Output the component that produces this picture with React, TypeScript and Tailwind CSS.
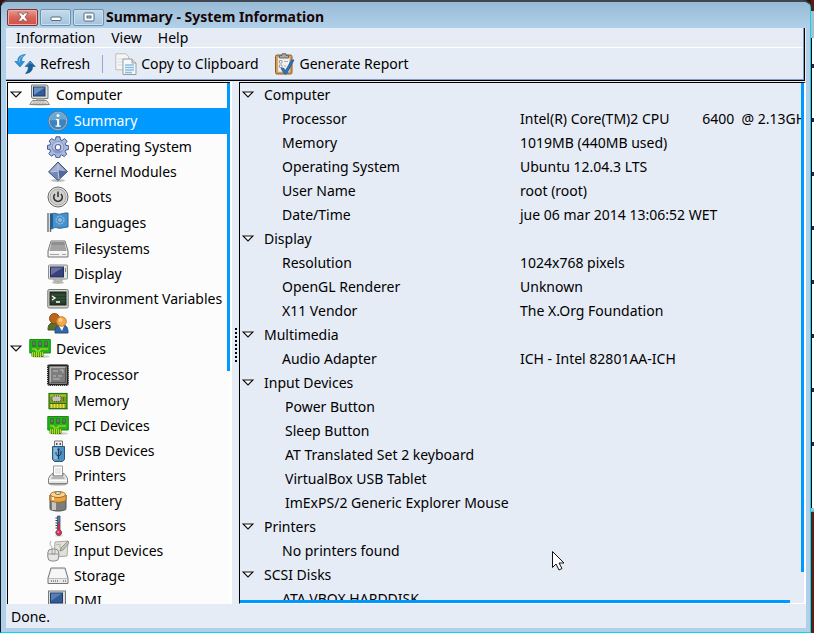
import React from "react";

type IconProps = { children: React.ReactNode; size?: string };

function Icon({ children, size = "size-[22px]" }: IconProps) {
  return (
    <svg viewBox="0 0 22 22" className={`${size} shrink-0`} aria-hidden="true">
      {children}
    </svg>
  );
}

const icons: Record<string, React.ReactNode> = {
  computer: (
    <>
      <ellipse cx="11" cy="20.5" rx="10" ry="1.2" fill="#ccc" />
      <path d="M2.5 1h15l1.500 1v12.500h-15l-1.500-1z" fill="#deded8" stroke="#777a74" />
      <rect x="4.500" y="3" width="11.500" height="9" fill="#315c96" stroke="#1e3b6b" />
      <path d="M5 3.500h11L5 11z" fill="#6b91c4" />
      <path d="M7 14.500h9v2H7z" fill="#b5b6b0" />
      <path d="M3.500 16.500h14l3 4H.8z" fill="#e4e4df" stroke="#888a85" />
      <path d="M4.500 18h12M3.500 19.300h14" stroke="#a5a69f" strokeDasharray="2 1" />
    </>
  ),
  summary: (
    <>
      <circle cx="11" cy="11" r="10" fill="#3d84bd" stroke="#61788b" />
      <circle cx="11" cy="11" r="8.800" fill="none" stroke="#91bfe0" />
      <path d="M3 10a8 8 0 0 1 16 0c-5-2-9 1-16 0z" fill="#76afd8" opacity=".8" />
      <circle cx="11" cy="5.600" r="1.500" fill="#fff" />
      <path d="M8.800 9h3.400v6.500h1.500v1.300H8.600v-1.300h1.500v-5.200H8.800z" fill="#fff" />
    </>
  ),
  gear: (
    <>
      <path
        d="M9 .8h4l.5 3.200 1.500.6 2.500-2 2.600 2.600-1.800 2.600.7 1.600 2.700.3v3.800l-3 .6-.6 1.600 1.700 2.400-2.600 2.500-2.500-1.700-1.500.6-.4 2.200H9l-.5-2.500-1.600-.7-2.500 1.700-2.600-2.600 1.700-2.500-.6-1.600-2.400-.3V9.400l2.500-.4.7-1.600-1.600-2.400 2.600-2.500 2.400 1.700 1.400-.6z"
        fill="#a9b8dd"
        stroke="#405a99"
      />
      <circle cx="11" cy="11.300" r="5.800" fill="#c3cce6" stroke="#7787b8" strokeWidth=".8" />
      <path d="M5.500 12.500c0 5 8 6.500 11 1-3 2-7 2-11-1z" fill="#8798c9" />
      <circle cx="11" cy="11.300" r="2.800" fill="#fff" stroke="#4a629f" strokeWidth="1.200" />
    </>
  ),
  kernel: (
    <>
      <ellipse cx="11" cy="19.500" rx="7" ry="1.500" fill="#bdbdbd" />
      <path d="M11 1l9.500 9.500-9.500 9L1.500 11z" fill="#7089b9" stroke="#445579" />
      <path d="M11 2l8 8.500-8-1-8.500 1.500z" fill="#a3b2d3" />
      <path d="M11 9.500l1 9 8-8z" fill="#526899" />
      <path d="M11 3v7l-7 1M11 10l1 8" stroke="#c5cee2" fill="none" />
    </>
  ),
  power: (
    <>
      <circle cx="11" cy="11" r="10" fill="#e3e3e1" stroke="#686868" />
      <circle cx="11" cy="11" r="8" fill="#d0d0ce" stroke="#aaa" />
      <path d="M8 8a4.300 4.300 0 1 0 6 0M11 5.500v5.500" fill="none" stroke="#333" strokeWidth="1.500" />
    </>
  ),
  flag: (
    <>
      <path d="M1 1v19M3.500 1v19" stroke="#777" strokeWidth="1.500" />
      <path d="M4 2c4-2 6 1 10 0s4-1 7-1v14c-5 0-6 2-10 1s-4 0-6 1z" fill="#4b91c9" stroke="#23669e" />
      <path d="M3 2h3v13l-3 4z" fill="#255f91" />
      <circle cx="13" cy="8" r="4" fill="none" stroke="#a9d3ef" strokeDasharray="2 1" />
      <circle cx="13" cy="8" r="2" fill="#8abfe5" />
    </>
  ),
  drive: (
    <>
      <path d="M4 3h14l3 10v6H1v-6z" fill="#f1f1ef" stroke="#737373" strokeLinejoin="round" />
      <path d="M4.800 4h12.400l2.500 9H2.300z" fill="#a2a2a2" />
      <path d="M4.800 4h12.400l.8 3H4z" fill="#8f8f8f" />
      <path d="M2 14h18" stroke="#fff" />
      <path d="M3 16.500h9M15 16.500h4" stroke="#a7a7a5" />
    </>
  ),
  display: (
    <>
      <ellipse cx="11" cy="19.500" rx="6" ry="1.500" fill="#b8b8b4" />
      <path d="M7 15h8v3H7z" fill="#ddd" stroke="#999" />
      <rect x="1.500" y="2" width="19" height="14" rx="1" fill="#e5e5df" stroke="#8b8d87" />
      <rect x="3.500" y="4" width="13" height="10" fill="#37417d" stroke="#252e60" />
      <path d="M4 4.500h12L4 12z" fill="#69719d" />
      <path d="M18.500 5v4" stroke="#888" />
    </>
  ),
  terminal: (
    <>
      <rect x=".8" y="1.500" width="20.400" height="18.500" rx="1.500" fill="#d6d7d1" stroke="#73766f" />
      <rect x="3" y="4" width="16" height="13" fill="#263c2a" stroke="#162218" />
      <path d="M3.500 7h15M3.500 10h15M3.500 13h15" stroke="#3c5d3e" />
      <path d="M5 8l3 2-3 2M9 14h4" fill="none" stroke="#fff" strokeWidth="1.300" />
    </>
  ),
  users: (
    <>
      <path d="M1 17c0-7 3-7 7-7s5 3 5 7z" fill="#59702a" stroke="#42551e" />
      <circle cx="7.500" cy="5.500" r="5" fill="#bd661b" stroke="#8f4b11" />
      <path d="M8 20c0-6 2-8 7-8s6 3 6 8z" fill="#3566a4" stroke="#254d81" />
      <path d="M12 13l3 5 2-5z" fill="#fff" />
      <circle cx="14.500" cy="8.500" r="4.800" fill="#f5a74b" stroke="#cf7c26" />
      <circle cx="13.500" cy="7" r="2" fill="#ffd18b" />
    </>
  ),
  card: (
    <>
      <ellipse cx="12" cy="18.500" rx="9" ry="1.300" fill="#ccc" />
      <path d="M.8 1.500h20.500v13.500H14v3.500H3V15H.8z" fill="#21b619" stroke="#148c10" />
      <path d="M3.500 3.500h3v5h-3zM9.500 3.500h3v5h-3zM15.500 3.500h3v5h-3z" fill="#423e36" />
      <path d="M5 4v3.500M11 4v3.500M17 4v3.500" stroke="#aaa" />
      <path d="M3 11h4v2h4v-2h8" fill="none" stroke="#ddd42d" />
      <path d="M3.500 14v5M5.500 14v5M7.500 14v5M9.500 14v5M11.500 14v5M13.500 14v4" stroke="#dfc426" />
    </>
  ),
  chip: (
    <>
      <rect x="0" y="0" width="22" height="22" rx="3" fill="#222" />
      <rect x=".5" y=".5" width="21" height="21" rx="2" fill="none" stroke="#d0d0d0" strokeDasharray="1 1" />
      <rect x="2" y="2" width="18" height="18" rx="1" fill="#7d7d7d" />
      <path d="M3.500 18.500v-15h15" fill="none" stroke="#b5b5b5" />
      <path d="M3.500 18.500h15v-15" fill="none" stroke="#555" />
      <path d="M6 7h5M13 6h3v3M6 12h3M11 12h4M6 15h7" fill="none" stroke="#bebebe" />
    </>
  ),
  memory: (
    <>
      <path d="M2 19h19" stroke="#ccc" strokeWidth="2" />
      <rect x="2" y="3.500" width="18" height="15" fill="#7d9a18" stroke="#1f7a12" strokeWidth="1.200" />
      <path d="M3 4.500h16v2H3z" fill="#aebf3a" />
      <rect x="5" y="6" width="9" height="5.500" rx="2" fill="#c4c4bc" stroke="#394224" strokeDasharray="1 1" />
      <path d="M16.500 7v4" stroke="#51701a" />
      <path d="M3 13h16v1H3z" fill="#2e6d12" />
      <path d="M4.500 14v4M7.500 14v4M10.500 14v4M13.500 14v4M16.500 14v4" stroke="#efdc3a" strokeWidth="2" />
    </>
  ),
  usb: (
    <>
      <path d="M7.500 1h8v7h-8z" fill="#ededeb" stroke="#777" />
      <path d="M9 3h1.500v2H9zM12.500 3H14v2h-1.500z" fill="#555" />
      <path d="M5.500 6.500h12v13l-2 2h-8l-2-2z" fill="#4f8fbf" stroke="#24577e" />
      <path d="M6.500 7.500h4v12h-4z" fill="#8ab7d6" />
      <path d="M11.500 19V9M9 12v2.500l2.500 2M14 11v3l-2.500 2.500" fill="none" stroke="#183957" />
      <path d="M11.500 8l-1.500 2h3z" fill="#183957" />
    </>
  ),
  printer: (
    <>
      <ellipse cx="11" cy="19.500" rx="9" ry="1" fill="#aaa" />
      <path d="M6.500 1h9v10h-9z" fill="#fff" stroke="#999" />
      <path d="M6 8L3.500 10l-2 3.500v5h19v-5l-2-3.500L16 8v3H6z" fill="#e6e6e4" stroke="#828282" />
      <path d="M8 3h6v6H8z" fill="#e9e9e8" />
      <path d="M4.500 12h13v2h-13z" fill="#b5b5b5" />
      <path d="M2 15.500h18" stroke="#fff" />
    </>
  ),
  battery: (
    <>
      <ellipse cx="11" cy="19.500" rx="9" ry="1.800" fill="#bbb" />
      <path d="M3 5v13c0 4 16 4 16 0V5z" fill="#7c7e7a" stroke="#555" />
      <path d="M5 9h4v11H5z" fill="#c6c7c3" />
      <path d="M3 5v5c2 3 14 3 16 0V5z" fill="#eda642" stroke="#a76a21" />
      <ellipse cx="11" cy="4.500" rx="7.500" ry="3" fill="#ffd58a" stroke="#a76a21" />
      <ellipse cx="11" cy="3" rx="3" ry="1.500" fill="#dfd9cc" stroke="#8f795d" />
      <path d="M6 7v3" stroke="#fff0ca" strokeWidth="2" />
    </>
  ),
  sensor: (
    <>
      <ellipse cx="12" cy="20.500" rx="4" ry="1.200" fill="#ddd" />
      <path d="M10.500 1h2.500v14a2.900 2.900 0 1 1-2.500 0z" fill="#4a80b5" stroke="#2f4c70" strokeWidth=".8" />
      <path d="M11.700 7v10" stroke="#df2337" strokeWidth="1.600" />
      <circle cx="11.800" cy="17.500" r="2.600" fill="#e92943" />
      <circle cx="11.300" cy="17" r=".9" fill="#ff9ca8" />
      <path d="M8.500 3h2M8.500 5.500h2M8.500 8h2M8.500 10.500h2M8.500 13h2" stroke="#333" />
    </>
  ),
  input: (
    <>
      <path d="M8 2l13-1-1 15-13 1z" fill="#e1e1d8" stroke="#aaa99d" />
      <path d="M9 5l4-1v4h5" stroke="#b8b7ab" fill="none" />
      <path d="M21 1l-7 7-1 3 3-1 6-7z" fill="#c4c4bc" stroke="#777" strokeWidth=".7" />
      <path d="M5 10C6 5 1 6 4 1" fill="none" stroke="#aaa" />
      <rect x=".8" y="9" width="11" height="12" rx="4" fill="#e6e6e4" stroke="#888" />
      <path d="M1 14h11M5 9v5h3V9" fill="none" stroke="#999" />
    </>
  ),
  storage: (
    <>
      <path d="M4 3h14l3 10v5.500H1V13z" fill="#e9e9e9" stroke="#777" strokeLinejoin="round" />
      <path d="M5 4.500h12l2.500 8.500H2.500z" fill="#f6f6f4" />
      <path d="M2 13.500h18" stroke="#bbb" />
      <path d="M4 16h8M16 16h3" stroke="#777" strokeWidth="1.500" strokeDasharray="1 1" />
    </>
  ),
  dmi: (
    <>
      <rect x="1.500" y="1" width="17" height="14.500" fill="#ddd" stroke="#777a74" />
      <rect x="3.500" y="3" width="12" height="10" fill="#315c96" stroke="#1e3b6b" />
      <path d="M4 3.500h11L4 11z" fill="#557eb5" />
      <path d="M3 17h14l3 4H1z" fill="#ddd" stroke="#888" />
    </>
  ),
};

function Triangle() {
  return (
    <svg viewBox="0 0 12 8" className="h-2 w-3 shrink-0" aria-hidden="true">
      <path d="M1 1h10L6 6z" fill="#fff" stroke="#111" strokeWidth="1.200" />
    </svg>
  );
}

type Node = { label: string; icon: string; tall?: boolean };
const tree: { label: string; icon: string; items: Node[] }[] = [
  {
    label: "Computer",
    icon: "computer",
    items: [
      { label: "Summary", icon: "summary", tall: true },
      { label: "Operating System", icon: "gear", tall: true },
      { label: "Kernel Modules", icon: "kernel" },
      { label: "Boots", icon: "power" },
      { label: "Languages", icon: "flag", tall: true },
      { label: "Filesystems", icon: "drive", tall: true },
      { label: "Display", icon: "display" },
      { label: "Environment Variables", icon: "terminal" },
      { label: "Users", icon: "users" },
    ],
  },
  {
    label: "Devices",
    icon: "card",
    items: [
      { label: "Processor", icon: "chip", tall: true },
      { label: "Memory", icon: "memory", tall: true },
      { label: "PCI Devices", icon: "card" },
      { label: "USB Devices", icon: "usb" },
      { label: "Printers", icon: "printer" },
      { label: "Battery", icon: "battery" },
      { label: "Sensors", icon: "sensor" },
      { label: "Input Devices", icon: "input" },
      { label: "Storage", icon: "storage" },
      { label: "DMI", icon: "dmi" },
    ],
  },
];

const details: { title: string; indent?: boolean; rows: [string, string?][] }[] = [
  {
    title: "Computer",
    rows: [
      ["Processor", "Intel(R) Core(TM)2 CPU         6400  @ 2.13GHz"],
      ["Memory", "1019MB (440MB used)"],
      ["Operating System", "Ubuntu 12.04.3 LTS"],
      ["User Name", "root (root)"],
      ["Date/Time", "jue 06 mar 2014 13:06:52 WET"],
    ],
  },
  {
    title: "Display",
    rows: [
      ["Resolution", "1024x768 pixels"],
      ["OpenGL Renderer", "Unknown"],
      ["X11 Vendor", "The X.Org Foundation"],
    ],
  },
  { title: "Multimedia", rows: [["Audio Adapter", "ICH - Intel 82801AA-ICH"]] },
  {
    title: "Input Devices",
    indent: true,
    rows: [
      ["Power Button"],
      ["Sleep Button"],
      ["AT Translated Set 2 keyboard"],
      ["VirtualBox USB Tablet"],
      ["ImExPS/2 Generic Explorer Mouse"],
    ],
  },
  { title: "Printers", rows: [["No printers found"]] },
  { title: "SCSI Disks", rows: [["ATA VBOX HARDDISK"]] },
];

function TitleBar() {
  const base = "flex h-[17px] w-[31px] items-center justify-center rounded-[2px] border";
  const plain = `${base} border-[#6e90ab] bg-linear-to-b from-[#c5dbec] to-[#a3c3dc] shadow-[inset_0_0_0_1px_#c9e0f1]`;
  return (
    <header className="flex h-[26px] shrink-0 items-center gap-0.5 rounded-t-md bg-linear-to-b from-[#98bad5] to-[#b0d1e9] pt-1 pl-1.5">
      <button aria-label="Close" className={`${base} border-[#7c3434] bg-linear-to-b from-[#e99b93] via-[#d9645a] to-[#d05046] shadow-[inset_0_0_0_1px_#f0aba4]`}>
        <svg viewBox="0 0 12 10" className="h-2.5 w-3">
          <path d="M.8.800h3.400L6 2.800 7.800.800h3.400L8 5l3.200 4.200H7.800L6 7.200 4.200 9.200H.8L4 5z" fill="#fff" stroke="#74504e" strokeWidth=".8" />
        </svg>
      </button>
      <button aria-label="Minimize" className={plain}>
        <svg viewBox="0 0 12 10" className="h-2.5 w-3">
          <rect x="1" y="5" width="10" height="3.500" rx="1" fill="#fff" stroke="#526b80" />
        </svg>
      </button>
      <button aria-label="Maximize" className={plain}>
        <svg viewBox="0 0 12 10" className="h-2.5 w-3">
          <rect x="1" y="1" width="10" height="8" rx="1" fill="#fff" stroke="#526b80" />
          <rect x="4" y="4" width="4" height="2" fill="#a9c7df" stroke="#526b80" />
        </svg>
      </button>
      <h1 className="text-sm leading-5 font-bold text-[#190505]">Summary - System Information</h1>
    </header>
  );
}

function Toolbar() {
  return (
    <div className="flex h-8 shrink-0 items-center border-t border-white pl-2">
      <button className="flex items-center gap-1">
        <Icon>
          <path d="M11.500 1.500C5 2 3.800 4.500 3.800 8.500H.8l5.200 5.500 4.500-5.500H7.600c0-3 .9-5 3.900-7z" fill="#2b93d6" stroke="#1b6fae" strokeWidth=".6" />
          <path d="M11.500 20.500c5.500-.8 7-3 7-7h2.700L16.200 8l-5 5.500h3.200c0 3-.9 5-2.900 7z" fill="#17609f" stroke="#124a7d" strokeWidth=".6" />
          <path d="M9 3C6 4 5.200 6 5.200 9.500" stroke="#7ccaf3" fill="none" />
          <path d="M13 12.500l3.200-3.400 2 2.200" stroke="#5d9dcd" fill="none" />
        </Icon>
        Refresh
      </button>
      <div className="mx-3 h-[18px] w-px bg-[#8fa9d0]" />
      <button className="flex items-center gap-1">
        <Icon>
          <path d="M.8.800h10l3 3v13H.8z" fill="#f5f5f5" stroke="#bcbcbc" />
          <path d="M3 6h6M3 9h5M3 12h5" stroke="#cfdde6" />
          <path d="M8 6h9l4 4v11.500H8z" fill="#f5f8fa" stroke="#999" />
          <path d="M17 6v4h4" fill="#ddd" stroke="#999" />
          <path d="M10 12h9M10 14.500h9M10 17h9M10 19.500h7" stroke="#88bde2" strokeWidth="1.300" />
        </Icon>
        Copy to Clipboard
      </button>
      <button className="ml-[15px] flex items-center gap-1">
        <Icon>
          <rect x="1.500" y="2" width="16.500" height="19" rx="1.500" fill="#d9984c" stroke="#925b20" />
          <path d="M3.800 4h12v15h-12z" fill="#f2f2ef" stroke="#aaa" strokeWidth=".6" />
          <path d="M5.500 5V2.500H8V.800h4v1.700h2.500V5z" fill="#aaa" stroke="#666" />
          <path d="M5.500 7.500h2.500V10H5.500zM5.500 12h2.500v2.500H5.500z" fill="#fff" stroke="#888" strokeWidth=".8" />
          <path d="M10 8.500h4M10 13h2" stroke="#aaa" />
          <path d="M7 15.500l2.500-.5 2 2.500 6-10.500H20l-7.500 14h-2z" fill="#2e73b8" stroke="#215c98" strokeWidth=".8" />
        </Icon>
        Generate Report
      </button>
    </div>
  );
}

function Tree() {
  return (
    <nav className="flex w-[223px] shrink-0 overflow-hidden border-t border-l border-black bg-[#fcfcfc]">
      <ul className="min-w-0 flex-1">
        {tree.map((group) => (
          <li key={group.label}>
            <button className="flex h-[25px] w-full items-center pb-px pl-0.5">
              <Triangle />
              <span className="ml-[7px] flex items-center gap-[5px]">
                <Icon>{icons[group.icon]}</Icon>
                {group.label}
              </span>
            </button>
            <ul>
              {group.items.map((item) => (
                <li key={item.label}>
                  <button
                    className={`flex w-full items-center gap-[5px] pl-[39px] whitespace-nowrap ${item.tall ? "h-[26px]" : "h-[25px] pb-px"} ${item.label === "Summary" ? "bg-[#0099ff] text-white" : ""}`}
                  >
                    <Icon>{icons[item.icon]}</Icon>
                    {item.label}
                  </button>
                </li>
              ))}
            </ul>
          </li>
        ))}
      </ul>
      <div className="h-[288px] w-[3px] shrink-0 bg-[#0099ff]" />
    </nav>
  );
}

function Details() {
  return (
    <main className="flex min-w-0 flex-1 flex-col overflow-hidden border-t border-r-2 border-b border-l border-t-black border-r-white border-b-white border-l-black">
      <div className="flex min-h-0 flex-1">
        <div className="min-w-0 flex-1 overflow-hidden">
          <table className="w-full table-fixed border-collapse text-left whitespace-pre">
            <colgroup>
              <col className="w-[280px]" />
              <col />
            </colgroup>
            {details.map((section) => (
              <tbody key={section.title}>
                <tr className="h-6">
                  <th colSpan={2} className="p-0 font-normal">
                    <button className="flex items-center gap-2.5 pl-0.5">
                      <Triangle />
                      {section.title}
                    </button>
                  </th>
                </tr>
                {section.rows.map(([name, value]) => (
                  <tr key={name} className="h-6">
                    <td className={`p-0 ${section.indent ? "pl-[45px]" : "pl-[42px]"}`}>{name}</td>
                    <td className="p-0">{value}</td>
                  </tr>
                ))}
              </tbody>
            ))}
          </table>
        </div>
        <div className="mb-7 w-[3px] shrink-0 bg-[#0099ff]" />
      </div>
      <div className="mr-3.5 h-[3px] shrink-0 bg-[#0099ff]" />
    </main>
  );
}

function Backdrop() {
  return (
    <div className="flex w-[3px] shrink-0 flex-col bg-[#5b1d14]">
      <div className="mt-[11px] h-[27px] bg-[#a9bdcc]" />
      <div className="flex h-[470px] flex-col gap-[50px] border-l border-black bg-white pt-[26px]">
        {[0, 1, 2, 3, 4, 5, 6, 7].map((n) => (
          <div key={n} className="h-1 bg-[#25254d]" />
        ))}
      </div>
      <div className="h-[3px] bg-[#a9bdcc]" />
      <div className="h-px bg-[#00d8ee]" />
    </div>
  );
}

export default function App() {
  return (
    <div className="relative flex h-screen overflow-hidden bg-[#36100d] font-['Noto_Sans','Open_Sans',sans-serif] text-sm leading-5 text-black">
      <div className="flex min-w-0 flex-1 flex-col rounded-t-lg border-t-2 border-r border-b border-l border-t-[#3e4750] border-r-[#00d8ee] border-b-[#00d8ee] border-l-[#101820] bg-[#b0d0e9]">
        <TitleBar />
        <div className="mr-1 mb-1 ml-[5px] flex min-h-0 flex-1 flex-col bg-[#e6ecf6]">
          <div className="mr-px shrink-0 border-r border-b border-black">
            <div className="border-r border-b border-[#8499c6]">
              <div className="flex h-[19px] items-center gap-4 pl-2.5">
                <button>Information</button>
                <button>View</button>
                <button>Help</button>
              </div>
              <Toolbar />
            </div>
          </div>
          <div className="mt-px flex min-h-0 flex-1 pl-px">
            <Tree />
            <div className="flex w-[9px] shrink-0 items-center justify-center border-l-2 border-white">
              <div className="mt-1 h-[34px] border-l-2 border-dotted border-black" />
            </div>
            <Details />
          </div>
          <footer className="flex h-6 shrink-0 items-center pt-0.5 pl-[5px]">Done.</footer>
        </div>
      </div>
      <Backdrop />
      <svg viewBox="0 0 14 22" className="absolute top-[550px] left-[551px] h-[22px] w-3.5" aria-hidden="true">
        <path d="M1.500 1.500v16l3.500-3.500 3 6 3-1.500-3-5.500h5z" fill="#fff" stroke="#111" />
      </svg>
    </div>
  );
}
